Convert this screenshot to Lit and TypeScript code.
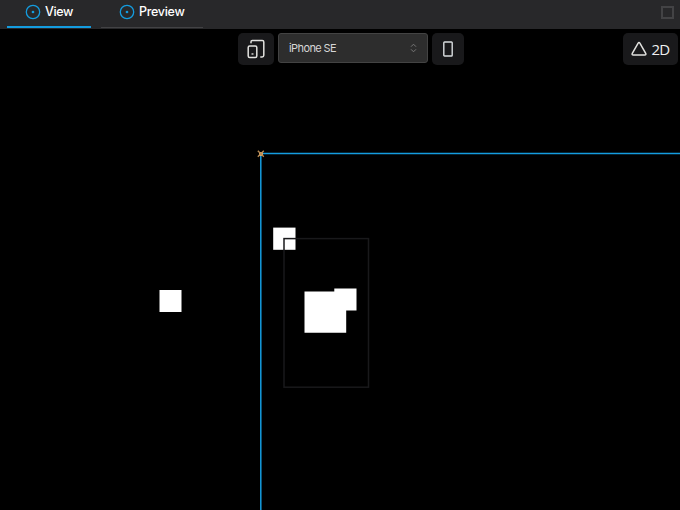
import { LitElement, html, css } from "lit";
import { customElement } from "lit/decorators.js";

const target = html`<svg class="target" width="16" height="16" viewBox="0 0 16 16">
  <circle cx="8" cy="8" r="6.7" fill="none" stroke="#149cdf" stroke-width="1.3" />
  <circle cx="8" cy="8" r="1.35" fill="#149cdf" />
</svg>`;

@customElement("app-root")
export class AppRoot extends LitElement {
  static styles = css`
    :host {
      display: flex;
      flex-direction: column;
      width: 100%;
      height: 100vh;
      overflow: hidden;
      background: #000;
      color: #fff;
      font-family: Inter, "Liberation Sans", sans-serif;
    }
    * { box-sizing: border-box; }
    svg { display: block; flex: none; }
    .tabs {
      display: flex;
      flex: none;
      height: 29px;
      padding-left: 7px;
      gap: 10px;
      background: #28282a;
    }
    .tab {
      display: flex;
      align-items: flex-start;
      height: 28px;
      padding: 4px 0 0 18px;
      gap: 4px;
      border-bottom: 1px solid #434345;
      font-size: 12.5px;
      line-height: 15px;
      font-weight: 500;
      letter-spacing: -0.4px;
      white-space: nowrap;
    }
    .view { width: 84px; border-bottom: 2px solid #149cdf; }
    .preview { width: 102px; letter-spacing: -0.3px; }
    .maximize {
      width: 13px;
      height: 13px;
      margin: 6px 6px 0 auto;
      border: 2px solid #434345;
    }
    .stage { position: relative; flex: 1; min-height: 0; }
    .canvas { position: absolute; inset: 0; }
    .toolbar {
      position: relative;
      display: flex;
      align-items: flex-start;
      padding: 4px 2px 0 238px;
      gap: 4px;
    }
    .button {
      display: flex;
      align-items: center;
      justify-content: center;
      height: 32px;
      border-radius: 5px;
      background: #19191b;
    }
    .devices { width: 36px; }
    .phone { width: 32px; }
    .select {
      display: flex;
      align-items: center;
      justify-content: space-between;
      width: 150px;
      height: 30px;
      padding: 0 10px;
      border: 1px solid #434343;
      border-radius: 3px;
      background: #2d2d2d;
      color: #d6d6d6;
      font-size: 11px;
      letter-spacing: -0.6px;
    }
    .mode {
      width: 55px;
      margin-left: auto;
      gap: 4px;
      font-family: "Open Sans", "Noto Sans", sans-serif;
      font-size: 15px;
      letter-spacing: -0.7px;
      color: #f0f0f0;
    }
  `;

  render() {
    return html`
      <div class="tabs">
        <div class="tab view">${target}<span>View</span></div>
        <div class="tab preview">${target}<span>Preview</span></div>
        <div class="maximize"></div>
      </div>
      <div class="stage">
        <svg class="canvas" width="680" height="481" viewBox="0 29 680 481">
          <rect x="159.5" y="290" width="22" height="22" fill="#fff" />
          <rect x="273.2" y="227.6" width="22.3" height="22.2" fill="#fff" />
          <rect x="284" y="238.6" width="84.5" height="148.6" fill="none" stroke="#19191b" stroke-width="1.5" />
          <path d="M304.5 291.4H334.3V288.4H356.5V310.4H346.2V332.7H304.5Z" fill="#fff" />
          <path d="M260.8 510V153.6H680" fill="none" stroke="#149cdf" stroke-width="1.5" />
          <rect x="259" y="152" width="4" height="4" fill="#d9aa68" />
          <path d="M257.8 150.8l6 6m0-6l-6 6" stroke="#b98b55" stroke-width="1.3" />
        </svg>
        <div class="toolbar">
          <div class="button devices">
            <svg width="18" height="20" viewBox="0 0 18 20" fill="none" stroke="#e2e2df" stroke-width="1.5" stroke-linejoin="round" stroke-linecap="round">
              <path d="M4 3.8V2.8Q4 1.5 5.3 1.5H15.3Q16.8 1.5 16.8 3V16.3Q16.8 18 15.1 18H13.8" />
              <rect x="1.2" y="7" width="8.6" height="11.4" rx="1.5" />
              <circle cx="5.5" cy="15" r=".3" />
            </svg>
          </div>
          <div class="select">
            <span>iPhone SE</span>
            <svg width="7" height="10" viewBox="0 0 7 10" fill="none" stroke="#777" stroke-width="1">
              <path d="M1 3.7L3.5 1.2L6 3.7M1 6.3L3.5 8.8L6 6.3" />
            </svg>
          </div>
          <div class="button phone">
            <svg width="10" height="16" viewBox="0 0 10 16">
              <rect x=".8" y="1" width="8.4" height="14" rx=".8" fill="none" stroke="#d9dde0" stroke-width="1.4" />
            </svg>
          </div>
          <div class="button mode">
            <svg width="16" height="16" viewBox="0 0 16 16">
              <path d="M7 2.3Q8 .7 9 2.3L14.7 12.3Q15.4 14 13.7 14H2.3Q.6 14 1.3 12.3Z" fill="none" stroke="#e2e2df" stroke-width="1.5" />
            </svg>
            <span>2D</span>
          </div>
        </div>
      </div>
    `;
  }
}
